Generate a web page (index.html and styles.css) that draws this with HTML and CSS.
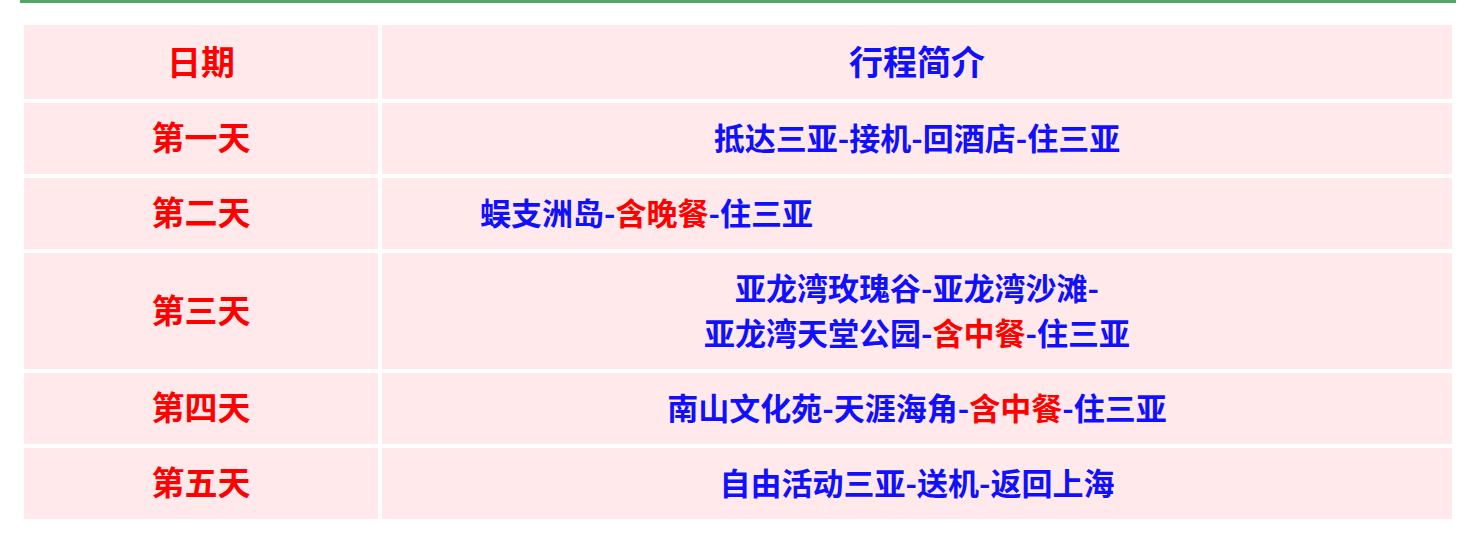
FILE: index.html
```html
<!DOCTYPE html>
<html lang="zh-CN">
<head>
<meta charset="utf-8">
<title>行程简介</title>
<link rel="stylesheet" href="styles.css">
</head>
<body>
<div class="page">
  <div class="rule"></div>
  <table class="plan">
    <colgroup>
      <col class="col-day">
      <col class="col-desc">
    </colgroup>
    <thead>
      <tr>
        <th class="day head">日期</th>
        <th class="desc head">行程简介</th>
      </tr>
    </thead>
    <tbody>
      <tr>
        <td class="day">第一天</td>
        <td class="desc">抵达三亚-接机-回酒店-住三亚</td>
      </tr>
      <tr>
        <td class="day">第二天</td>
        <td class="desc indent">蜈支洲岛-<span class="meal">含晚餐</span>-住三亚</td>
      </tr>
      <tr>
        <td class="day">第三天</td>
        <td class="desc">亚龙湾玫瑰谷-亚龙湾沙滩-<br>亚龙湾天堂公园-<span class="meal">含中餐</span>-住三亚</td>
      </tr>
      <tr>
        <td class="day">第四天</td>
        <td class="desc">南山文化苑-天涯海角-<span class="meal">含中餐</span>-住三亚</td>
      </tr>
      <tr>
        <td class="day">第五天</td>
        <td class="desc">自由活动三亚-送机-返回上海</td>
      </tr>
    </tbody>
  </table>
</div>
</body>
</html>
```

FILE: styles.css
```css
html, body {
  margin: 0;
  padding: 0;
  background: #ffffff;
}

.page {
  width: 1436px;
  margin-left: 20px;
  font-family: "Noto Sans CJK SC", "Noto Sans", sans-serif;
  font-weight: 700;
}

.rule {
  height: 3px;
  background: #54a668;
}

.plan {
  width: 1436px;
  margin-top: 18px;
  border-collapse: separate;
  border-spacing: 4px;
  table-layout: fixed;
}

.col-day {
  width: 354px;
}

.col-desc {
  width: 1070px;
}

.plan th,
.plan td {
  background: #ffe9eb;
  padding: 11px 0 15px;
  line-height: 45px;
  text-align: center;
  vertical-align: middle;
  font-weight: 700;
}

.plan th.head {
  padding: 13px 0 16px;
}

.day {
  color: #ff0000;
  font-size: 33px;
}

.desc {
  color: #1010ff;
  font-size: 31px;
}

.day.head,
.desc.head {
  font-size: 34px;
}

.plan td.indent {
  text-align: left;
  padding-left: 98px;
}

.meal {
  color: #ff0000;
}
```
